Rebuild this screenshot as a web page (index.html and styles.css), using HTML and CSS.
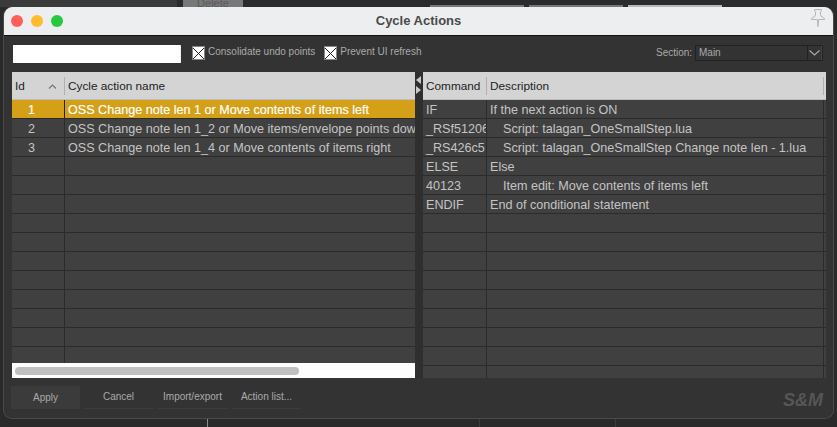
FILE: index.html
```html
<!DOCTYPE html>
<html lang="en">
<head>
<meta charset="utf-8">
<title>Cycle Actions</title>
<link rel="stylesheet" href="styles.css">
</head>
<body>
<div class="desk-top">
  <span class="bg-btn bg-delete">Delete</span>
  <span class="bg-btn bg-a"></span>
  <span class="bg-btn bg-b"></span>
  <span class="bg-btn bg-c"></span>
</div>
<div class="desk-tick tick-a"></div>
<div class="desk-tick tick-b"></div>
<div class="desk-tick tick-c"></div>
<main class="window">
  <header class="titlebar">
    <span class="light red"></span><span class="light yellow"></span><span class="light green"></span>
    <h1 class="title">Cycle Actions</h1>
    <svg class="pin" width="16" height="18" viewBox="0 0 16 18"><path d="M4.500 0.500H11.500V1.800L10.300 2.500L10.800 7L14.500 9.500V10.500H8.700L8 17.500L7.300 10.500H1.500V9.500L5.200 7L5.700 2.500L4.500 1.800Z" fill="#eceef0" stroke="#b4b6b8" stroke-width="1"/></svg>
  </header>
  <section class="toolbar">
    <div class="filter"></div>
    <label class="check first"><span class="box"><svg width="11" height="11" viewBox="0 0 11 11"><path d="M0 0L11 11M11 0L0 11" stroke="#222" stroke-width="1"/></svg></span>Consolidate undo points</label>
    <label class="check"><span class="box"><svg width="11" height="11" viewBox="0 0 11 11"><path d="M0 0L11 11M11 0L0 11" stroke="#222" stroke-width="1"/></svg></span>Prevent UI refresh</label>
    <span class="section-label">Section:</span>
    <div class="combo"><span class="combo-val">Main</span><span class="combo-btn"><svg width="11" height="6" viewBox="0 0 11 6"><path d="M0.500 0.500L5.500 5L10.500 0.500" fill="none" stroke="#a8a8a8" stroke-width="1.200"/></svg></span></div>
  </section>
  <section class="panes">
    <div class="table left">
      <div class="row head"><div class="c1">Id<svg class="sort" width="9" height="5" viewBox="0 0 9 5"><path d="M1 4.500L4.500 1L8 4.500" fill="none" stroke="#777" stroke-width="1.200"/></svg></div><div class="c2">Cycle action name</div></div>
      <div class="rows">
        <div class="row sel"><div class="c1 num">1</div><div class="c2">OSS Change note len 1 or Move contents of items left</div></div>
        <div class="row"><div class="c1 num">2</div><div class="c2">OSS Change note len 1_2 or Move items/envelope points down</div></div>
        <div class="row"><div class="c1 num">3</div><div class="c2">OSS Change note len 1_4 or Move contents of items right</div></div>
        <div class="row"><div class="c1"></div><div class="c2"></div></div>
        <div class="row"><div class="c1"></div><div class="c2"></div></div>
        <div class="row"><div class="c1"></div><div class="c2"></div></div>
        <div class="row"><div class="c1"></div><div class="c2"></div></div>
        <div class="row"><div class="c1"></div><div class="c2"></div></div>
        <div class="row"><div class="c1"></div><div class="c2"></div></div>
        <div class="row"><div class="c1"></div><div class="c2"></div></div>
        <div class="row"><div class="c1"></div><div class="c2"></div></div>
        <div class="row"><div class="c1"></div><div class="c2"></div></div>
        <div class="row"><div class="c1"></div><div class="c2"></div></div>
        <div class="row"><div class="c1"></div><div class="c2"></div></div>
      </div>
      <div class="hscroll"><div class="thumb"></div></div>
    </div>
    <div class="splitter">
      <svg width="8" height="24" viewBox="0 0 8 24"><path d="M6 3V11L1 7Z" fill="#c9c9c9"/><path d="M1 13V21L6 17Z" fill="#c9c9c9"/></svg>
    </div>
    <div class="table right">
      <div class="row head"><div class="c3">Command</div><div class="c4">Description</div><div class="c5"></div></div>
      <div class="rows">
        <div class="row"><div class="c3">IF</div><div class="c4">If the next action is ON</div><div class="c5"></div></div>
        <div class="row"><div class="c3">_RSf51206</div><div class="c4 sub">Script: talagan_OneSmallStep.lua</div><div class="c5"></div></div>
        <div class="row"><div class="c3">_RS426c5</div><div class="c4 sub">Script: talagan_OneSmallStep Change note len - 1.lua</div><div class="c5"></div></div>
        <div class="row"><div class="c3">ELSE</div><div class="c4">Else</div><div class="c5"></div></div>
        <div class="row"><div class="c3">40123</div><div class="c4 sub">Item edit: Move contents of items left</div><div class="c5"></div></div>
        <div class="row"><div class="c3">ENDIF</div><div class="c4">End of conditional statement</div><div class="c5"></div></div>
        <div class="row"><div class="c3"></div><div class="c4"></div><div class="c5"></div></div>
        <div class="row"><div class="c3"></div><div class="c4"></div><div class="c5"></div></div>
        <div class="row"><div class="c3"></div><div class="c4"></div><div class="c5"></div></div>
        <div class="row"><div class="c3"></div><div class="c4"></div><div class="c5"></div></div>
        <div class="row"><div class="c3"></div><div class="c4"></div><div class="c5"></div></div>
        <div class="row"><div class="c3"></div><div class="c4"></div><div class="c5"></div></div>
        <div class="row"><div class="c3"></div><div class="c4"></div><div class="c5"></div></div>
        <div class="row"><div class="c3"></div><div class="c4"></div><div class="c5"></div></div>
        <div class="row"><div class="c3"></div><div class="c4"></div><div class="c5"></div></div>
      </div>
    </div>
  </section>
  <footer class="footer">
    <button class="btn apply">Apply</button>
    <button class="btn">Cancel</button>
    <button class="btn wide">Import/export</button>
    <button class="btn">Action list...</button>
    <span class="brand">S&amp;M</span>
  </footer>
</main>
</body>
</html>
```
FILE: styles.css
```css
* { box-sizing: border-box; }
html, body { margin: 0; padding: 0; width: 837px; height: 427px; overflow: hidden; }
body { background: #2a2a2a; font-family: "Liberation Sans", Arial, sans-serif; position: relative; }

.desk-top { height: 7px; position: relative; background: linear-gradient(to right, #3a3a3a 177px, #2b2b2b 177px); }
.bg-btn { position: absolute; top: 0; display: block; }
.bg-delete { left: 183px; width: 60px; height: 7px; background: #787878; color: #5a5a5a; font-size: 11px; line-height: 7px; text-align: center; overflow: hidden; }
.bg-a, .bg-b, .bg-c { top: 5px; height: 2px; width: 94px; }
.bg-a { left: 430px; background: #777; }
.bg-b { left: 529px; background: #777; }
.bg-c { left: 628px; background: #b8b8b8; }
.desk-tick { position: absolute; top: 419px; width: 1px; height: 8px; background: #3c3c3c; }
.tick-a { left: 207px; background: #8c8c8c; }
.tick-b { left: 479px; }
.tick-c { left: 615px; }

.window { position: absolute; left: 3px; top: 7px; width: 831px; height: 412px; background: #333; border: 1px solid #4a4a4a; border-top: 0; border-radius: 9px; overflow: hidden; }

.titlebar { height: 29px; background: #eceef0; border-bottom: 1px solid #111; display: flex; align-items: center; position: relative; padding-left: 7px; gap: 8px; }
.light { width: 12px; height: 12px; border-radius: 50%; }
.red { background: #ff5f57; }
.yellow { background: #febc2e; }
.green { background: #28c840; }
.title { position: absolute; left: 0; right: 0; top: 0; margin: 0; text-align: center; font-size: 13px; line-height: 28px; font-weight: 700; color: #4a4a4a; }
.pin { position: absolute; right: 7px; top: 2px; }

.toolbar { height: 36px; position: relative; padding: 9px 0 0 9px; display: flex; align-items: flex-start; color: #aaa; font-size: 10px; }
.filter { width: 168px; height: 18px; background: #fff; border-right: 1px dotted #ddd; }
.check { display: flex; align-items: flex-start; line-height: 13px; margin-left: 9px; white-space: nowrap; }
.check.first { margin-left: 11px; }
.box { width: 13px; height: 14px; background: #fff; border: 1px solid #888; display: flex; align-items: center; justify-content: center; margin: 1px 3px 0 0; flex: none; }
.section-label { position: absolute; left: 652px; top: 10px; line-height: 13px; }
.combo { position: absolute; left: 691px; top: 9px; width: 128px; height: 16px; border: 1px solid #222; display: flex; line-height: 13px; }
.combo-val { flex: 1; padding-left: 3px; }
.combo-btn { width: 15px; border-left: 1px solid #222; border-right: 1px solid #444; display: flex; align-items: center; justify-content: center; }

.panes { height: 306px; display: flex; padding-left: 8px; }
.table { width: 403px; height: 306px; overflow: hidden; display: flex; flex-direction: column; font-size: 12.6px; }
.splitter { width: 8px; padding-top: 1px; background: #2f2f2f; height: 306px; }
.splitter svg { display: block; }
.rows { flex: 1; overflow: hidden; background: #404040; }
.row { display: flex; height: 19px; line-height: 20px; border-bottom: 1px solid #2b2b2b; background: #404040; color: #c4c4c4; white-space: nowrap; }
.row.head { height: 28px; font-size: 11.8px; background: #d4d4d4; color: #222; border-bottom: 1px solid #bdbdbd; flex: none; position: relative; }
.row.sel { background: #d4a017; color: #fff; -webkit-text-stroke: .15px #fff; }
.c1 { width: 53px; border-right: 1px solid #2b2b2b; padding-left: 3px; flex: none; position: relative; }
.c2 { flex: 1; padding-left: 3px; overflow: hidden; }
.c3 { width: 64px; border-right: 1px solid #2b2b2b; padding-left: 3px; flex: none; overflow: hidden; }
.c4 { flex: 1; padding-left: 3px; overflow: hidden; }
.c4.sub { padding-left: 16px; }
.c5 { width: 3px; border-left: 1px solid #2b2b2b; flex: none; }
.head .c1, .head .c3 { border-right: 1px solid #b0b0b0; height: 18px; line-height: 18px; margin-top: 5px; }
.head .c2, .head .c4 { height: 18px; line-height: 18px; margin-top: 5px; }
.head .c5 { border-left: 1px solid #b0b0b0; height: 18px; margin-top: 5px; }
.num { padding-left: 16px; }
.sel .c1, .sel .c2 { border-color: #222; }
.sort { position: absolute; left: 36px; top: 7px; }
.hscroll { height: 15px; background: #fdfdfd; padding: 4px 3px; flex: none; }
.thumb { width: 284px; height: 8px; border-radius: 4px; background: #c0c0c0; }

.footer { height: 41px; display: flex; align-items: flex-start; padding: 8px 0 0 7px; gap: 4px; position: relative; }
.btn { width: 69px; height: 23px; padding: 0 0 1px; background: #333; border: 0; border-bottom: 1px solid #3c3c3c; color: #aaa; font: 10px "Liberation Sans", Arial, sans-serif; }
.btn.apply { background: #3b3b3b; border-bottom: 0; }
.btn.wide { width: 71px; }
.brand { position: absolute; right: 10px; top: 12px; font-size: 18px; line-height: 20px; font-weight: 700; font-style: italic; color: #565656; }
```
